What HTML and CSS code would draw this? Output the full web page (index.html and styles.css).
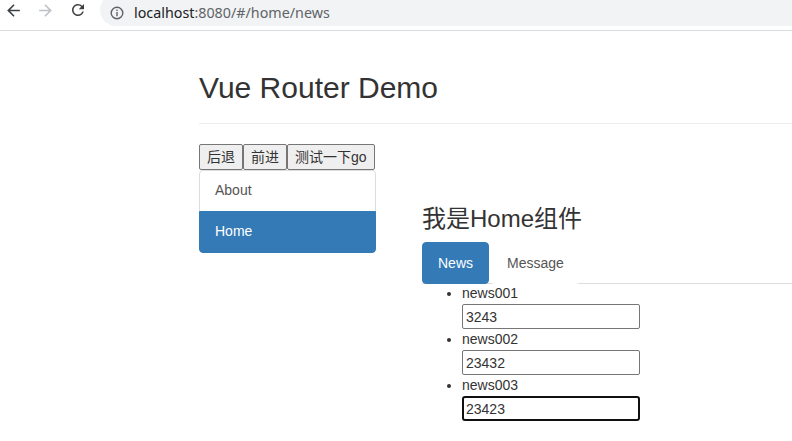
FILE: index.html
```html
<!DOCTYPE html>
<html lang="zh-CN">
<head>
<meta charset="utf-8">
<title>Vue Router Demo</title>
<link rel="stylesheet" href="styles.css">
</head>
<body>
<div class="chrome">
  <svg class="nav-icon back" viewBox="0 0 24 24"><path d="M20 11H7.83l5.59-5.59L12 4l-8 8 8 8 1.41-1.41L7.83 13H20v-2z"/></svg>
  <svg class="nav-icon fwd" viewBox="0 0 24 24"><path d="M12 4l-1.41 1.41L16.17 11H4v2h12.17l-5.58 5.59L12 20l8-8z"/></svg>
  <svg class="nav-icon reload" viewBox="0 0 24 24"><path d="M17.65 6.35A7.958 7.958 0 0 0 12 4c-4.42 0-7.99 3.58-7.99 8s3.57 8 7.99 8c3.73 0 6.84-2.550 7.730-6h-2.08A5.99 5.99 0 0 1 12 18c-3.31 0-6-2.69-6-6s2.69-6 6-6c1.66 0 3.14.69 4.22 1.78L13 11h7V4l-2.35 2.35z"/></svg>
  <div class="omnibox">
    <svg class="info" viewBox="0 0 14 14"><circle cx="7" cy="7" r="5.8" fill="none" stroke="#5f6368" stroke-width="1.4"/><rect x="6.3" y="6" width="1.4" height="4.2" fill="#5f6368"/><rect x="6.3" y="3.6" width="1.4" height="1.4" fill="#5f6368"/></svg>
    <span class="url"><span class="host">localhost</span>:8080/#/home/news</span>
  </div>
</div>
<div class="page">
  <div class="page-header"><h2>Vue Router Demo</h2></div>
  <div class="btns"><button class="btn">后退</button><button class="btn">前进</button><button class="btn">测试一下go</button></div>
  <div class="row">
    <div class="side">
      <div class="list-group">
        <a class="lg-item">About</a>
        <a class="lg-item active">Home</a>
      </div>
    </div>
    <div class="main">
      <h3>我是Home组件</h3>
      <ul class="tabs">
        <li><a class="tab active">News</a></li>
        <li><a class="tab">Message</a></li>
      </ul>
      <ul class="news">
        <li>news001<input class="inp" type="text" value="3243"></li>
        <li>news002<input class="inp" type="text" value="23432"></li>
        <li>news003<input class="inp focus" type="text" value="23423"></li>
      </ul>
    </div>
  </div>
</div>
</body>
</html>
```

FILE: styles.css
```css
* { box-sizing: border-box; }
html, body { margin: 0; padding: 0; background: #fff; }
body {
  font-family: "Liberation Sans", "Noto Sans CJK SC", sans-serif;
  font-size: 14px;
  line-height: 1.42857;
  color: #333;
  overflow: hidden;
  width: 792px;
  height: 441px;
}

/* browser chrome */
.chrome {
  height: 31px;
  border-bottom: 1px solid #dadce0;
  display: flex;
  align-items: flex-start;
  overflow: hidden;
}
.nav-icon { width: 19px; height: 19px; margin-top: 0.5px; flex: none; }
.back { margin-left: 4px; fill: #3c4043; }
.fwd { margin-left: 13px; fill: #bdc1c6; }
.reload { width: 18px; height: 18px; margin-top: 1px; margin-left: 14px; fill: #3c4043; }
.omnibox {
  flex: 1;
  margin-left: 13px;
  margin-top: -6px;
  height: 32px;
  border-radius: 16px 0 0 16px;
  background: #f1f3f4;
  display: flex;
  align-items: center;
  padding: 6px 0 0 10px;
}
.info { width: 14px; height: 14px; flex: none; }
.url {
  margin-left: 10px;
  font-family: "Noto Sans", "Open Sans", sans-serif;
  font-size: 14.3px;
  color: #5f6368;
  white-space: nowrap;
}
.host { color: #202124; }

/* page */
.page { padding-left: 199px; }
.page-header {
  margin: 40px 0 20px;
  padding-bottom: 9px;
  border-bottom: 1px solid #eee;
}
.page-header h2 {
  margin: 0 0 10px;
  font-size: 30px;
  font-weight: normal;
  line-height: 1.1;
}
.btns { display: flex; }
.btn {
  font: inherit;
  line-height: 20px;
  height: 26px;
  padding: 2px 7px;
  margin: 0;
  border: 1px solid #767676;
  border-radius: 2px;
  background: #efefef;
  color: #333;
}
.row { display: flex; }
.side { width: 177px; flex: none; }
.list-group { margin: 0; }
.lg-item {
  display: block;
  padding: 10px 15px;
  border: 1px solid #ddd;
  margin-bottom: -1px;
  color: #555;
  background: #fff;
}
.lg-item:first-child { border-radius: 4px 4px 0 0; }
.lg-item:last-child { border-radius: 0 0 4px 4px; margin-bottom: 0; }
.lg-item.active { background: #337ab7; border-color: #337ab7; color: #fff; }

.main { flex: 1; margin-left: 46px; padding-top: 16px; }
.main h3 {
  margin: 20px 0 10px;
  font-size: 24px;
  font-weight: normal;
  line-height: 1.1;
}
.tabs {
  display: flex;
  list-style: none;
  margin: 0;
  padding: 0;
  border-bottom: 1px solid #ddd;
}
.tabs li { margin-bottom: -1px; }
.tab {
  display: block;
  padding: 10px 15px;
  line-height: 20px;
  border: 1px solid transparent;
  border-radius: 4px;
  margin-right: 2px;
  background: #fff;
  color: #555;
}
.tab.active { background: #337ab7; border-color: #337ab7; color: #fff; }

.news { margin: 0 0 10px; padding-left: 40px; }
.news li { padding-bottom: 1px; }
.inp {
  display: block;
  width: 178px;
  height: 25px;
  font: inherit;
  color: #333;
  padding: 0 3px;
  border: 1px solid #767676;
  border-radius: 2px;
  background: #fff;
  outline: none;
}
.inp.focus { border: 2px solid #101010; border-radius: 3px; padding: 0 2px; }
```
